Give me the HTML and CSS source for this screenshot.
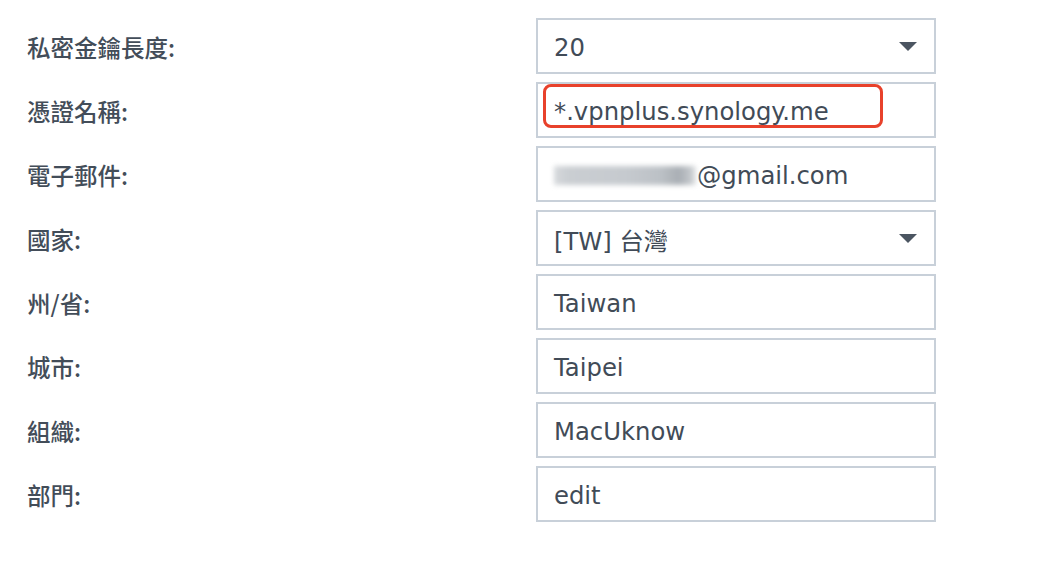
FILE: index.html
```html
<!DOCTYPE html>
<html lang="zh-Hant">
<head>
<meta charset="utf-8">
<link rel="stylesheet" href="styles.css">
</head>
<body>
<div class="form">
  <div class="row">
    <div class="label">私密金鑰長度:</div>
    <div class="field select"><span class="value">20</span><span class="arrow"></span></div>
  </div>
  <div class="row">
    <div class="label">憑證名稱:</div>
    <div class="field"><span class="value">*.vpnplus.synology.me</span><span class="highlight"></span></div>
  </div>
  <div class="row">
    <div class="label">電子郵件:</div>
    <div class="field"><span class="value"><span class="blurred"></span>@gmail.com</span></div>
  </div>
  <div class="row">
    <div class="label">國家:</div>
    <div class="field select"><span class="value">[TW] 台灣</span><span class="arrow"></span></div>
  </div>
  <div class="row">
    <div class="label">州/省:</div>
    <div class="field"><span class="value">Taiwan</span></div>
  </div>
  <div class="row">
    <div class="label">城市:</div>
    <div class="field"><span class="value">Taipei</span></div>
  </div>
  <div class="row">
    <div class="label">組織:</div>
    <div class="field"><span class="value">MacUknow</span></div>
  </div>
  <div class="row">
    <div class="label">部門:</div>
    <div class="field"><span class="value">edit</span></div>
  </div>
</div>
</body>
</html>
```
FILE: styles.css
```css
html, body {
  margin: 0;
  padding: 0;
  background: #ffffff;
}
body {
  width: 1048px;
  height: 564px;
  overflow: hidden;
  font-family: "DejaVu Sans", "Noto Sans CJK TC", sans-serif;
  color: #414b57;
}
.form {
  display: flex;
  flex-direction: column;
  gap: 8px;
  padding: 18px 0 0 27px;
}
.row {
  display: flex;
  align-items: center;
  height: 56px;
}
.label {
  width: 509px;
  font-family: "Noto Sans CJK TC", "DejaVu Sans", sans-serif;
  font-size: 23.5px;
  font-weight: 500;
  color: #434d59;
  padding-top: 1px;
}
.field {
  position: relative;
  box-sizing: border-box;
  width: 400px;
  height: 56px;
  border: 2px solid #c8d0d9;
  display: flex;
  align-items: center;
  padding: 2px 16px 0 16px;
  font-size: 24.3px;
}
.value {
  font-family: "DejaVu Sans", "Noto Sans CJK TC", sans-serif;
  white-space: nowrap;
  display: flex;
  align-items: center;
}
.blurred {
  display: inline-block;
  width: 142px;
  height: 19px;
  margin: 0 1px 0 0;
  background: linear-gradient(to right, #d6d9dc 0%, #caced2 10%, #c6cacf 50%, #bcc1c6 75%, #a9aeb4 88%, #c3c7cb 96%, #e4e6e8 100%);
  filter: blur(2.5px);
}
.select .arrow {
  margin-left: auto;
  margin-right: 1px;
  margin-top: -2px;
  width: 0;
  height: 0;
  border-left: 9.5px solid transparent;
  border-right: 9.5px solid transparent;
  border-top: 9px solid #4b5561;
}
.highlight {
  position: absolute;
  left: 5px;
  top: 0;
  width: 340px;
  height: 44px;
  box-sizing: border-box;
  border: 3px solid #e8412b;
  border-radius: 8px;
}
```
